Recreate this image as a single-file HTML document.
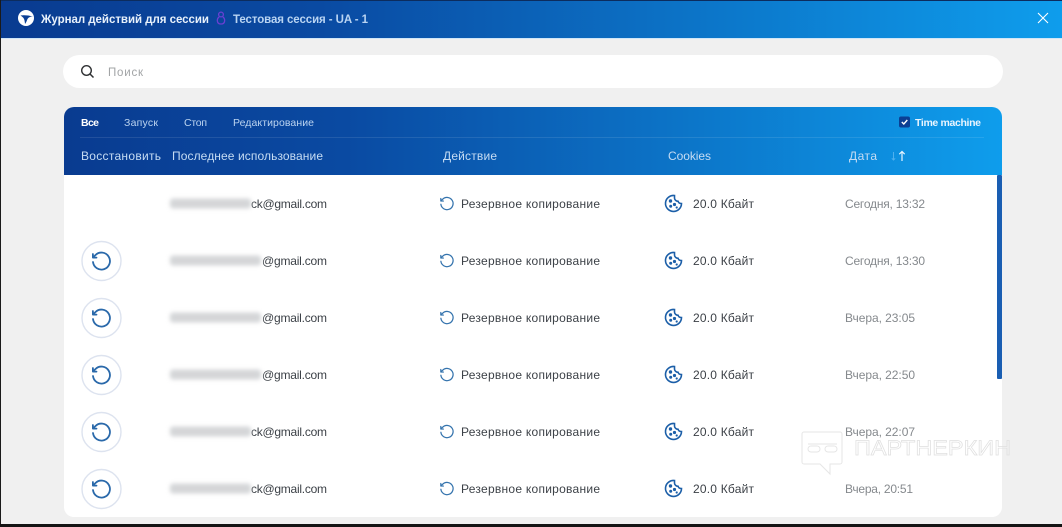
<!DOCTYPE html>
<html lang="ru"><head><meta charset="utf-8"><title>Журнал действий</title>
<style>
html,body{margin:0;padding:0;width:1062px;height:527px;overflow:hidden;background:#f0f0f0}
svg{display:block;position:absolute;left:0;top:0;filter:blur(.3px)}
text{font-family:"Liberation Sans","Noto Sans CJK SC",sans-serif}
.w{fill:#e8f1fb;font-weight:bold;font-size:11.5px}
.t{fill:#3c4147;font-size:12px}
.d{fill:#85898d;font-size:12px}
.h{fill:#c6dcf3;font-size:12px}
</style></head><body>
<svg width="1062" height="527" viewBox="0 0 1062 527" xmlns="http://www.w3.org/2000/svg">
<defs>
<linearGradient id="g" x1="0" x2="1" y1="0" y2="0"><stop offset="0" stop-color="#093b90"/><stop offset=".3" stop-color="#0a4aa2"/><stop offset="1" stop-color="#0e9dec"/></linearGradient>
<filter id="b" filterUnits="userSpaceOnUse" x="150" y="-20" width="130" height="40"><feGaussianBlur stdDeviation="2.2"/></filter>
<g id="r" fill="none" stroke-linecap="round" stroke-linejoin="round"><path d="M-8.5 1A8.5 8.5 0 1 0-6-6L-8.5-3.5M-8.6-7V-3.400H-5"/></g>
<g id="c"><path d="M1-8A8 8 0 1 0 8 0C6.500 0 5-.5 4.600-2.200 2.800-2.200 1-3.500 1-5.500Z" fill="none" stroke="#1c5fa8" stroke-width="1.600"/><circle cx="-3" cy="-2.500" r="1.700" fill="#1c5fa8"/><circle cx="1" cy="1" r="1.600" fill="#1c5fa8"/><circle cx="-2.800" cy="2.800" r="1.500" fill="#1c5fa8"/><circle cx="3.200" cy="4" r="1.100" fill="#1c5fa8"/></g>
</defs>
<rect width="1062" height="527" fill="#f0f0f0"/>
<rect y="0" width="1062" height="38" fill="url(#g)"/>
<rect y="0" width="1062" height="1" fill="#0c2c5e"/>
<rect y="38" width="1062" height="1" fill="#cfe6f8"/>
<rect x="0" y="0" width="1" height="527" fill="#1a1a1a"/>
<rect y="524" width="1062" height="3" fill="#141414"/>

<!-- header -->
<circle cx="26" cy="18" r="8" fill="#fff"/>
<path d="M20.500 15.500C23 15 28 15 33 16.500 30 16.500 28.500 17.500 27.500 19 26.800 20.500 26.500 22 25 24 24.800 21.500 24.500 19.500 23.500 18 22.500 17 21.500 16 20.500 15.500Z" fill="#0a3f95"/>
<text x="41" y="23" class="w" textLength="168" lengthAdjust="spacing">Журнал действий для сессии</text>
<g fill="none" stroke="#6a3fd2" stroke-width="1.300"><circle cx="221" cy="14.500" r="2.400"/><path d="M219.200 16.800C216.500 19 216.500 24 221 24S225.500 19 222.800 16.800"/></g>
<text x="233" y="23" fill="#b9d4f2" font-weight="bold" font-size="11.500" textLength="135" lengthAdjust="spacing">Тестовая сессия - UA - 1</text>
<path d="M1038 13l10 10M1048 13l-10 10" stroke="#fff" stroke-width="1.100" fill="none"/>

<!-- search -->
<rect x="63" y="55" width="940" height="33" rx="16.500" fill="#fff"/>
<circle cx="86.500" cy="70.500" r="4.800" fill="none" stroke="#2f3133" stroke-width="1.400"/>
<path d="M90 74l3.500 3.500" stroke="#2f3133" stroke-width="1.500"/>
<text x="108" y="76" fill="#a2a4a6" font-size="11.500" textLength="35" lengthAdjust="spacing">Поиск</text>

<!-- panel -->
<path d="M74 107H992A10 10 0 0 1 1002 117V507A10 10 0 0 1 992 517H74A10 10 0 0 1 64 507V117A10 10 0 0 1 74 107Z" fill="#fff"/>
<path d="M74 107H992A10 10 0 0 1 1002 117V175H64V117A10 10 0 0 1 74 107Z" fill="url(#g)"/>
<rect x="80" y="137" width="904" height="1" fill="#fff" opacity=".1"/>
<text x="81" y="126" fill="#fff" font-weight="bold" font-size="10.500" textLength="18" lengthAdjust="spacing">Все</text>
<text x="124" y="126" fill="#bcd4f0" font-size="10.500" textLength="34" lengthAdjust="spacing">Запуск</text>
<text x="184" y="126" fill="#bcd4f0" font-size="10.500" textLength="23" lengthAdjust="spacing">Стоп</text>
<text x="233" y="126" fill="#bcd4f0" font-size="10.500" textLength="81" lengthAdjust="spacing">Редактирование</text>
<rect x="899" y="116.500" width="11" height="11" rx="2" fill="#0b3f94"/>
<path d="M901.800 122l2 2 3.500-4" stroke="#fff" stroke-width="1.400" fill="none"/>
<text x="915" y="126" fill="#eaf5ff" font-weight="bold" font-size="10.500" textLength="66" lengthAdjust="spacing">Time machine</text>

<text x="81" y="160" class="h" textLength="80" lengthAdjust="spacing">Восстановить</text>
<text x="172" y="160" class="h" textLength="151" lengthAdjust="spacing">Последнее использование</text>
<text x="443" y="160" class="h" textLength="54" lengthAdjust="spacing">Действие</text>
<text x="668" y="160" class="h" textLength="43" lengthAdjust="spacing">Cookies</text>
<text x="849" y="160" class="h" textLength="28" lengthAdjust="spacing">Дата</text>
<path d="M893.500 152v8M891.800 158.300l1.700 1.700 1.700-1.700" stroke="#4fb0ee" stroke-width="1" fill="none"/>
<path d="M902 161v-9.500M899.300 154.200l2.700-2.700 2.700 2.700" stroke="#e6f4ff" stroke-width="1.200" fill="none"/>

<rect x="997" y="175" width="5" height="204" rx="1" fill="#1a5eb2"/>

<!-- row 1 -->
<g transform="translate(0,203.500)">
<text x="251" y="4.500" class="t" textLength="76" lengthAdjust="spacing">ck@gmail.com</text>
<rect x="170" y="-5" width="81" height="10" rx="3" fill="#d4d6d8" filter="url(#b)"/>
<use href="#r" transform="translate(447,0) scale(.72)" stroke="#3473ad" stroke-width="1.700"/>
<text x="461" y="4.500" class="t" textLength="139" lengthAdjust="spacing">Резервное копирование</text>
<use href="#c" transform="translate(673.500,0)"/>
<text x="693" y="4.500" class="t" textLength="61" lengthAdjust="spacing">20.0 Кбайт</text>
<text x="845" y="4.500" class="d" textLength="80" lengthAdjust="spacing">Сегодня, 13:32</text>
</g>
<!-- row 2 -->
<g transform="translate(0,260.500)">
<circle cx="101.500" cy="0.500" r="19.500" fill="#fff" stroke="#dde3ef" stroke-width="1.400"/>
<use href="#r" transform="translate(101.500,0.500)" stroke="#2a69aa" stroke-width="1.800"/>
<text x="262" y="4.500" class="t" textLength="65" lengthAdjust="spacing">@gmail.com</text>
<rect x="170" y="-5" width="91" height="10" rx="3" fill="#d4d6d8" filter="url(#b)"/>
<use href="#r" transform="translate(447,0) scale(.72)" stroke="#3473ad" stroke-width="1.700"/>
<text x="461" y="4.500" class="t" textLength="139" lengthAdjust="spacing">Резервное копирование</text>
<use href="#c" transform="translate(673.500,0)"/>
<text x="693" y="4.500" class="t" textLength="61" lengthAdjust="spacing">20.0 Кбайт</text>
<text x="845" y="4.500" class="d" textLength="80" lengthAdjust="spacing">Сегодня, 13:30</text>
</g>
<!-- row 3 -->
<g transform="translate(0,317.500)">
<circle cx="101.500" cy="0.500" r="19.500" fill="#fff" stroke="#dde3ef" stroke-width="1.400"/>
<use href="#r" transform="translate(101.500,0.500)" stroke="#2a69aa" stroke-width="1.800"/>
<text x="262" y="4.500" class="t" textLength="65" lengthAdjust="spacing">@gmail.com</text>
<rect x="170" y="-5" width="91" height="10" rx="3" fill="#d4d6d8" filter="url(#b)"/>
<use href="#r" transform="translate(447,0) scale(.72)" stroke="#3473ad" stroke-width="1.700"/>
<text x="461" y="4.500" class="t" textLength="139" lengthAdjust="spacing">Резервное копирование</text>
<use href="#c" transform="translate(673.500,0)"/>
<text x="693" y="4.500" class="t" textLength="61" lengthAdjust="spacing">20.0 Кбайт</text>
<text x="845" y="4.500" class="d" textLength="70" lengthAdjust="spacing">Вчера, 23:05</text>
</g>
<!-- row 4 -->
<g transform="translate(0,374.500)">
<circle cx="101.500" cy="0.500" r="19.500" fill="#fff" stroke="#dde3ef" stroke-width="1.400"/>
<use href="#r" transform="translate(101.500,0.500)" stroke="#2a69aa" stroke-width="1.800"/>
<text x="262" y="4.500" class="t" textLength="65" lengthAdjust="spacing">@gmail.com</text>
<rect x="170" y="-5" width="91" height="10" rx="3" fill="#d4d6d8" filter="url(#b)"/>
<use href="#r" transform="translate(447,0) scale(.72)" stroke="#3473ad" stroke-width="1.700"/>
<text x="461" y="4.500" class="t" textLength="139" lengthAdjust="spacing">Резервное копирование</text>
<use href="#c" transform="translate(673.500,0)"/>
<text x="693" y="4.500" class="t" textLength="61" lengthAdjust="spacing">20.0 Кбайт</text>
<text x="845" y="4.500" class="d" textLength="70" lengthAdjust="spacing">Вчера, 22:50</text>
</g>
<!-- row 5 -->
<g transform="translate(0,431.500)">
<circle cx="101.500" cy="0.500" r="19.500" fill="#fff" stroke="#dde3ef" stroke-width="1.400"/>
<use href="#r" transform="translate(101.500,0.500)" stroke="#2a69aa" stroke-width="1.800"/>
<text x="251" y="4.500" class="t" textLength="76" lengthAdjust="spacing">ck@gmail.com</text>
<rect x="170" y="-5" width="81" height="10" rx="3" fill="#d4d6d8" filter="url(#b)"/>
<use href="#r" transform="translate(447,0) scale(.72)" stroke="#3473ad" stroke-width="1.700"/>
<text x="461" y="4.500" class="t" textLength="139" lengthAdjust="spacing">Резервное копирование</text>
<use href="#c" transform="translate(673.500,0)"/>
<text x="693" y="4.500" class="t" textLength="61" lengthAdjust="spacing">20.0 Кбайт</text>
<text x="845" y="4.500" class="d" textLength="70" lengthAdjust="spacing">Вчера, 22:07</text>
</g>
<!-- row 6 -->
<g transform="translate(0,488.500)">
<circle cx="101.500" cy="0.500" r="19.500" fill="#fff" stroke="#dde3ef" stroke-width="1.400"/>
<use href="#r" transform="translate(101.500,0.500)" stroke="#2a69aa" stroke-width="1.800"/>
<text x="251" y="4.500" class="t" textLength="76" lengthAdjust="spacing">ck@gmail.com</text>
<rect x="170" y="-5" width="81" height="10" rx="3" fill="#d4d6d8" filter="url(#b)"/>
<use href="#r" transform="translate(447,0) scale(.72)" stroke="#3473ad" stroke-width="1.700"/>
<text x="461" y="4.500" class="t" textLength="139" lengthAdjust="spacing">Резервное копирование</text>
<use href="#c" transform="translate(673.500,0)"/>
<text x="693" y="4.500" class="t" textLength="61" lengthAdjust="spacing">20.0 Кбайт</text>
<text x="845" y="4.500" class="d" textLength="68" lengthAdjust="spacing">Вчера, 20:51</text>
</g>

<!-- watermark -->
<g fill="none" stroke="#e6e6e6" stroke-width="1">
<path d="M804 432H840A2 2 0 0 1 842 434V462A2 2 0 0 1 840 464H830V474L820 464H804A2 2 0 0 1 802 462V434A2 2 0 0 1 804 432Z"/>
<rect x="808" y="446" width="12" height="6" rx="3"/><rect x="825" y="446" width="12" height="6" rx="3"/>
<path d="M808 444H837"/>
</g>
<text x="854" y="455" fill="none" stroke="#e0e0e0" stroke-width=".7" font-size="21" textLength="157" lengthAdjust="spacingAndGlyphs">ПАРТНЕРКИН</text>
</svg>
</body></html>
